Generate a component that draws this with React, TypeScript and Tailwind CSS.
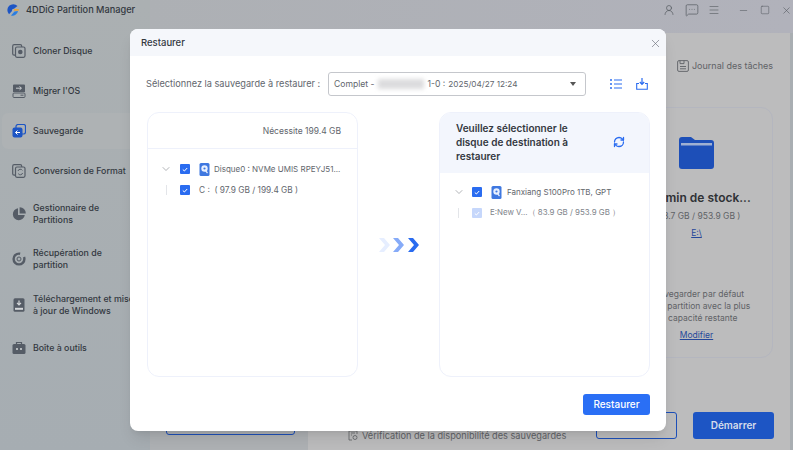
import { ChevronDown, X, Minus, Square, Menu, MessageSquareMore, UserRound, RefreshCw } from "lucide-react"

const font = { fontFamily: "Inter, 'Open Sans', sans-serif" }

function DiskIcon() {
  return (
    <svg width="11" height="13" viewBox="0 0 11 13">
      <rect x="0.5" y="0" width="10" height="13" rx="1.5" fill="#3f78e0" />
      <circle cx="5.5" cy="5.5" r="3.2" fill="#e8f0ff" />
      <circle cx="5.5" cy="5.5" r="1.1" fill="#3f78e0" />
      <path d="M6 7l2.5 3" stroke="#e8f0ff" strokeWidth="1.2" />
    </svg>
  )
}

function Check({ faded = false }: { faded?: boolean }) {
  return (
    <span className={`flex h-[10px] w-[10px] shrink-0 items-center justify-center rounded-[1px] ${faded ? "bg-[#c6d7fb]" : "bg-[#2a6cf0]"}`}>
      <svg width="6" height="5" viewBox="0 0 6 5">
        <path d="M0.8 2.5l1.6 1.5 2.8-3" fill="none" stroke="#fff" strokeWidth="1" />
      </svg>
    </span>
  )
}

function SideIcon({ kind }: { kind: string }) {
  const c = kind === "save" ? "#1d55c4" : "#555c66"
  return (
    <svg width="14" height="14" viewBox="0 0 14 14" className="shrink-0">
      {kind === "clone" && (
        <>
          <rect x="0.7" y="0.7" width="9" height="10.5" rx="1.5" fill="none" stroke={c} strokeWidth="1.2" />
          <rect x="3.5" y="3" width="9.5" height="10.3" rx="1.5" fill="#a9afb2" stroke={c} strokeWidth="1.2" />
          <circle cx="8.3" cy="8" r="2.3" fill={c} />
        </>
      )}
      {kind === "os" && (
        <>
          <path d="M2 0.5h10a1 1 0 011 1V8H1V1.5a1 1 0 011-1z" fill={c} />
          <rect x="1" y="9" width="12" height="4.5" rx="1" fill="none" stroke={c} />
          <path d="M4 4.2h5M7.5 2.5l2 1.7-2 1.7" fill="none" stroke="#d5d8da" strokeWidth="0.9" />
          <path d="M8.5 11.2h3" stroke={c} />
        </>
      )}
      {kind === "save" && (
        <>
          <rect x="4" y="0.5" width="9.5" height="9.5" rx="2" fill="none" stroke={c} strokeWidth="1.2" />
          <rect x="0.5" y="3.5" width="10" height="10" rx="2" fill={c} />
          <path d="M8 8.5H3.5M5.5 6.5l-2 2 2 2" fill="none" stroke="#fff" strokeWidth="1" />
        </>
      )}
      {kind === "convert" && (
        <>
          <rect x="0.7" y="0.7" width="9" height="10.5" rx="1.5" fill="none" stroke={c} strokeWidth="1.2" />
          <rect x="3.5" y="3" width="9.5" height="10.3" rx="1.5" fill="#a9afb2" stroke={c} strokeWidth="1.2" />
          <path d="M6 7a2.4 2.4 0 014.4-.6M10.6 9a2.4 2.4 0 01-4.4.6" fill="none" stroke={c} />
        </>
      )}
      {kind === "pie" && (
        <>
          <path d="M6 1.2a6 6 0 106.8 6.8H6z" fill={c} />
          <path d="M7.6 0.2a6 6 0 016.2 6.2H7.6z" fill={c} />
        </>
      )}
      {kind === "recover" && (
        <>
          <circle cx="7" cy="7" r="5.4" fill="none" stroke={c} strokeWidth="2.4" strokeDasharray="26 5" />
          <circle cx="7" cy="7" r="2" fill="none" stroke={c} />
        </>
      )}
      {kind === "win" && (
        <>
          <rect x="1.5" y="0.3" width="11" height="13.4" rx="1.5" fill={c} />
          <path d="M7 2.5v4M5 4.8l2 2 2-2" fill="none" stroke="#d5d8da" strokeWidth="1.2" />
          <rect x="3" y="9.8" width="8" height="2" fill="#d5d8da" />
        </>
      )}
      {kind === "tools" && (
        <>
          <path d="M4.5 3V1.5h5V3" fill="none" stroke={c} strokeWidth="1.2" />
          <rect x="0.5" y="3" width="13" height="10" rx="1.5" fill={c} />
          <circle cx="5" cy="8" r="1" fill="#d5d8da" />
          <circle cx="9" cy="8" r="1" fill="#d5d8da" />
        </>
      )}
    </svg>
  )
}

function SideItem({ kind, lines, active = false, h }: { kind: string; lines: string[]; active?: boolean; h: string }) {
  return (
    <div className={`flex items-center gap-[7px] pl-[12px] ${h} ${active ? "bg-[#aeb2b4]" : ""}`}>
      <SideIcon kind={kind} />
      <div className="whitespace-nowrap text-[8.8px] font-medium leading-[12px] text-[#33383f]">
        {lines.map((l) => (
          <div key={l}>{l}</div>
        ))}
      </div>
    </div>
  )
}

export default function App() {
  return (
    <div style={font} className="relative flex h-[450px] w-[793px] overflow-hidden bg-[#a9aeb2]">
      {/* fond assombri */}
      <div className="flex w-[150px] shrink-0 flex-col bg-gradient-to-b from-[#abb0b2] to-[#a6adb2]">
        <div className="flex h-[31px] shrink-0 items-center gap-[7px] pb-[11px] pl-[7px]">
          <svg width="12" height="12" viewBox="0 0 12 12" className="shrink-0">
            <path d="M10.5 2A5.5 5.5 0 102 10.2l3-3.2A1.800 1.800 0 017 4.800z" fill="#1d55c4" />
            <path d="M7 5h4.800v1.800H7z" fill="#e8a33a" />
            <path d="M7.500 7.500L11 7a5.500 5.500 0 01-7 4.400z" fill="#2a7de0" />
          </svg>
          <span className="whitespace-nowrap text-[9.2px] font-medium text-[#33383f]">4DDiG Partition Manager</span>
        </div>
        <div className="flex flex-col">
          <SideItem kind="clone" lines={["Cloner Disque"]} h="h-[40px]" />
          <SideItem kind="os" lines={["Migrer l'OS"]} h="h-[40px]" />
          <SideItem kind="save" lines={["Sauvegarde"]} h="h-[36px] my-[2px] ml-[2px] rounded-l-md !pl-[10px]" active />
          <SideItem kind="convert" lines={["Conversion de Format"]} h="h-[40px]" />
          <SideItem kind="pie" lines={["Gestionnaire de", "Partitions"]} h="h-[45px]" />
          <SideItem kind="recover" lines={["Récupération de", "partition"]} h="h-[46px]" />
          <SideItem kind="win" lines={["Téléchargement et mise", "à jour de Windows"]} h="h-[46px]" />
          <SideItem kind="tools" lines={["Boîte à outils"]} h="h-[40px]" />
        </div>
      </div>

      <div className="flex min-w-0 flex-1 flex-col">
        <div className="flex h-[33px] shrink-0 items-center justify-end bg-gradient-to-r from-[#adb0b4] to-[#b1b2bb] pb-[13px] pr-[1px] text-[#555a60]">
          <UserRound size={12} strokeWidth={1.4} />
          <MessageSquareMore size={14} strokeWidth={1.2} className="ml-[10px]" />
          <Menu size={12} strokeWidth={1.2} className="ml-[9px]" />
          <Minus size={11} strokeWidth={1.2} className="ml-[18px]" />
          <Square size={10} strokeWidth={1.3} className="ml-[11px]" />
          <X size={11} strokeWidth={1.3} className="ml-[11px]" />
        </div>
        <div className="mr-[3px] flex min-h-0 flex-1 flex-col bg-[#bcbcbd] text-[#5f6266]">
          <div className="flex h-[39px] shrink-0 items-end justify-end pr-[17px] text-[9px]">
            <svg width="12" height="12" viewBox="0 0 12 12" className="mr-[3px]">
              <path d="M2 .6h8a1.4 1.4 0 011.4 1.4v8a1.4 1.4 0 01-1.4 1.4H2A1.4 1.4 0 01.6 10V2A1.4 1.4 0 012 .6zM3 .6v3h4v-3M3 6.5h6M3 8.8h6" fill="none" stroke="#5f6266" strokeWidth="0.9" />
            </svg>
            Journal des tâches
          </div>
          <div className="ml-auto mr-[17px] mt-[35px] flex h-[251px] w-[172px] shrink-0 flex-col items-center rounded-xl border border-[#b4b6bf] pl-[19px] pt-[29px]">
            <svg width="35" height="32" viewBox="0 0 35 32" className="shrink-0">
              <path d="M3 0h9l4 3h16a3 3 0 013 3v23a3 3 0 01-3 3H3a3 3 0 01-3-3V3a3 3 0 013-3z" fill="#1d4fb8" />
              <rect x="2" y="6" width="31" height="2.500" fill="#9fb0d2" />
            </svg>
            <div className="mt-[20px] whitespace-nowrap text-[12px] font-semibold text-[#2f3135]">Chemin de stock...</div>
            <div className="mt-[3px] whitespace-nowrap text-[8.5px]">( 53.7 GB / 953.9 GB )</div>
            <div className="mt-[4px] text-[8.5px] text-[#26489a] underline">E:\</div>
            <div className="mt-[48px] text-center text-[8.5px] leading-[12px]">
              Sauvegarder par défaut
              <br />
              sur la partition avec la plus
              <br />
              de capacité restante
            </div>
            <div className="mt-[5px] text-[8.5px] text-[#26489a] underline">Modifier</div>
          </div>
          <div className="mt-[54px] flex items-start justify-end pr-[16px]">
            <div className="h-[27px] w-[81px] rounded-[3px] border border-[#1d4fb8]" />
            <div className="ml-[16px] flex h-[27px] w-[81px] items-center justify-center rounded-[3px] bg-[#1d55c4] text-[10px] font-semibold text-[#d5dcea]">
              Démarrer
            </div>
          </div>
        </div>
      </div>

      {/* derrière la fenêtre, en bas */}
      <div className="absolute left-[150px] top-[400px] h-[50px] w-[158px] bg-[#aeb1b4]">
        <div className="ml-[16px] h-[35px] w-[129px] rounded-[3px] border border-[#1d4fb8]" />
      </div>
      <div className="absolute left-[348px] top-[429px] flex items-center gap-[3px] whitespace-nowrap text-[9.2px] text-[#5f6266]">
        <svg width="11" height="11" viewBox="0 0 11 11">
          <path d="M4 10H1V1h8v3M3 3h4M3 5h1" fill="none" stroke="#5f6266" strokeWidth="0.8" />
          <circle cx="7" cy="7.500" r="2" fill="none" stroke="#5f6266" strokeWidth="0.8" />
        </svg>
        Vérification de la disponibilité des sauvegardes
      </div>

      {/* Restaurer */}
      <div className="absolute left-[130px] top-[29px] flex h-[402px] w-[536px] flex-col overflow-hidden rounded-lg bg-white shadow-lg">
        <div className="flex h-[27px] shrink-0 items-center justify-between bg-[#f5f7fb] pl-[11px] pr-[4px] pt-[1px]">
          <span className="text-[9.5px] font-medium text-[#33383f]">Restaurer</span>
          <X size={13} strokeWidth={1.2} className="text-[#6b7078]" />
        </div>
        <div className="flex flex-1 flex-col pl-[17px] pr-[16px]">
          <div className="mt-[16px] flex h-[24px] shrink-0 items-center">
            <span className="-ml-px w-[182px] whitespace-nowrap text-[9.2px] text-[#62666d]">Sélectionnez la sauvegarde à restaurer :</span>
            <div className="flex h-[24px] w-[258px] items-center rounded-[3px] border border-[#c5c7cc] pl-[5px] pr-[9px] text-[8.6px] text-[#62666d]">
              <span>Complet -</span>
              <span className="ml-[3px] mr-[4px] h-[10px] w-[46px] bg-[#dcdcde] blur-[2px]" />
              <span className="whitespace-nowrap">1-0 :</span>
              <span className="ml-[3px] whitespace-nowrap text-[8.2px]">2025/04/27 12:24</span>
              <span className="ml-auto h-0 w-0 border-x-[3px] border-t-[4px] border-x-transparent border-t-[#555]" />
            </div>
            <svg width="12" height="10" viewBox="0 0 12 10" className="ml-[24px]">
              <path d="M0 1h2M0 5h2M0 9h2" stroke="#2a6cf0" strokeWidth="1.600" />
              <path d="M4 1h8M4 5h8M4 9h8" stroke="#2a6cf0" strokeWidth="1.200" />
            </svg>
            <svg width="12" height="12" viewBox="0 0 12 12" className="ml-[14px]">
              <path d="M6 0v6M3.800 4L6 6.400 8.200 4" fill="none" stroke="#2a6cf0" strokeWidth="1.200" />
              <path d="M3 5.500H0.700v5.800h10.600V5.500H9" fill="none" stroke="#2a6cf0" strokeWidth="1.100" />
            </svg>
          </div>

          <div className="mt-[16px] flex h-[265px] shrink-0 items-stretch">
            <div className="flex w-[211px] shrink-0 flex-col rounded-xl border border-[#eef1fb]">
              <div className="flex h-[36px] shrink-0 items-center justify-end border-b border-[#eef1fb] pr-[16px] pt-[1px] text-[8.5px] text-[#62666d]">
                Nécessite 199.4 GB
              </div>
              <div className="flex flex-col pt-[13px] text-[8px] text-[#62666d]">
                <div className="flex h-[14px] items-center pl-[12px]">
                  <ChevronDown size={12} strokeWidth={1.2} className="shrink-0 text-[#7d8188]" />
                  <span className="ml-[8px]"><Check /></span>
                  <span className="ml-[9px]"><DiskIcon /></span>
                  <span className="ml-[4px] whitespace-nowrap">Disque0 : NVMe UMIS RPEYJ51...</span>
                </div>
                <div className="mt-[7px] flex h-[14px] items-center pl-[18px]">
                  <span className="h-[10px] w-px bg-[#e3e5e9]" />
                  <span className="ml-[13px]"><Check /></span>
                  <span className="ml-[9px] whitespace-pre text-[8.3px]">C :  ( 97.9 GB / 199.4 GB )</span>
                </div>
              </div>
            </div>

            <div className="flex w-[81px] shrink-0 items-center justify-center">
              <svg width="42" height="16" viewBox="0 0 42 16">
                <path d="M1 1h5l6 7-6 7H1l6-7z" fill="#e6eeff" />
                <path d="M15 1h5l6 7-6 7h-5l6-7z" fill="#86abf8" />
                <path d="M30 1h5l6 7-6 7h-5l6-7z" fill="#2a6cf0" />
              </svg>
            </div>

            <div className="flex w-[211px] shrink-0 flex-col overflow-hidden rounded-xl border border-[#eef1fb]">
              <div className="flex h-[60px] shrink-0 items-center bg-[#f3f6fd] pb-[2px] pl-[16px] pr-[24px]">
                <div className="flex-1 text-[10px] font-semibold leading-[14px] text-[#33383f]">
                  Veuillez sélectionner le
                  <br />
                  disque de destination à
                  <br />
                  restaurer
                </div>
                <RefreshCw size={12} strokeWidth={2.6} className="text-[#2a6cf0]" />
              </div>
              <div className="flex flex-col pt-[12px] text-[8px] text-[#62666d]">
                <div className="flex h-[14px] items-center pl-[13px]">
                  <ChevronDown size={12} strokeWidth={1.2} className="shrink-0 text-[#7d8188]" />
                  <span className="ml-[7px]"><Check /></span>
                  <span className="ml-[9px]"><DiskIcon /></span>
                  <span className="ml-[5px] whitespace-nowrap">Fanxiang S100Pro 1TB, GPT</span>
                </div>
                <div className="mt-[7px] flex h-[14px] items-center pl-[18px]">
                  <span className="h-[10px] w-px bg-[#e3e5e9]" />
                  <span className="ml-[13px]"><Check faded /></span>
                  <span className="ml-[8px] whitespace-pre text-[7.9px] text-[#80848b]">E:New V...（ 83.9 GB / 953.9 GB ）</span>
                </div>
              </div>
            </div>
          </div>

          <div className="mt-[17px] flex justify-end">
            <button className="h-[21px] w-[67px] rounded-[3px] bg-[#2a6ff5] text-[10px] font-medium text-white">Restaurer</button>
          </div>
        </div>
      </div>
    </div>
  )
}
